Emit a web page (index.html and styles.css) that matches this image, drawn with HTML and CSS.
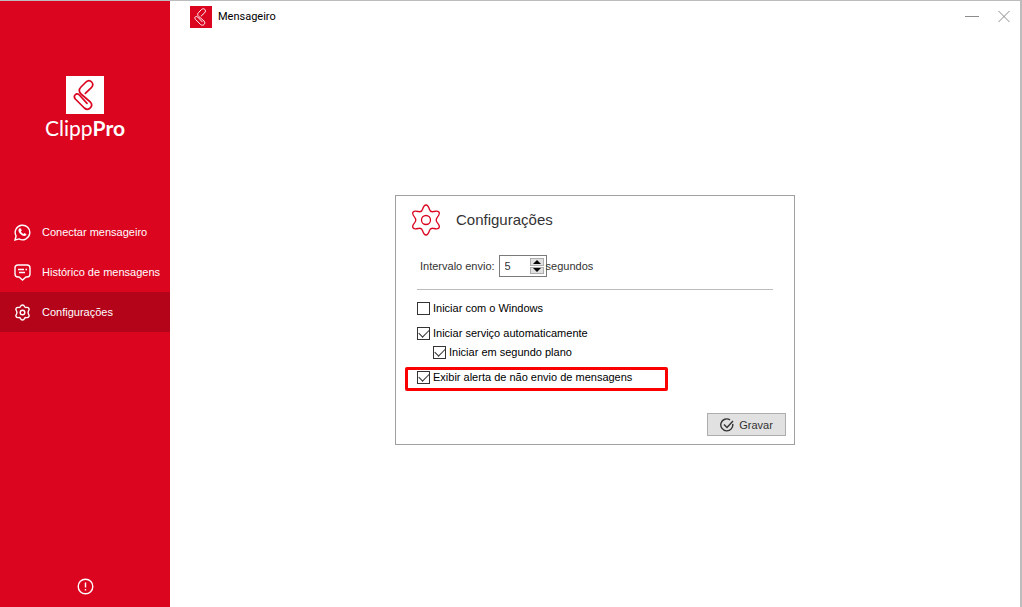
FILE: index.html
```html
<!doctype html>
<html lang="pt-BR">

<head>
	<meta charset="utf-8">
	<title>Mensageiro</title>
	<link rel="stylesheet" href="styles.css">
</head>

<body>
	<svg class="defs" aria-hidden="true">
		<symbol id="clip" viewBox="0 0 114 114">
			<path d="M58 52L76 35C87 23 73 7 60 18L45 33C38 40 38 47 45 54L73 78C84 90 68 107 55 96L28 69C20 59 31 49 40 57L63 82" fill="none" stroke="currentColor" stroke-linecap="round" stroke-linejoin="round"/>
		</symbol>
	</svg>
	<div class="window">
		<aside class="sidebar">
			<div class="brand">
				<svg class="brand-mark"><use href="#clip"/></svg>
				<div class="brand-name">Clipp<b>Pro</b></div>
			</div>
			<nav class="menu">
				<a class="menu-item" href="#conectar">
					<svg class="icon" viewBox="0 0 17 17">
						<path d="M1 16l1.100-4A7.300 7.300 0 1 1 5 14.900z"/>
						<path d="M5.300 4.500c-1.700 1.600-.4 4 1.200 5.600s4 2.800 5.600 1.200c.6-.6.3-1.100-.1-1.400l-1.500-.8-1.100 1c-.9-.3-2.100-1.500-2.500-2.500l.9-1.100-.7-1.600c-.3-.8-1.100-1-1.800-.4z" class="solid"/>
					</svg>
					Conectar mensageiro
				</a>
				<a class="menu-item" href="#historico">
					<svg class="icon" viewBox="0 0 17 17">
						<path d="M4 1h9q3 0 3 3v6q0 3-3 3h-1l-3.500 3L5 13H4q-3 0-3-3V4q0-3 3-3z"/>
						<path d="M4 5.500h6M11.500 5.500h1.500M5 8.500h6"/>
					</svg>
					Histórico de mensagens
				</a>
				<a class="menu-item active" href="#configuracoes">
					<svg class="icon" viewBox="0 0 17 17">
						<path d="M6.500 2.500Q7 1 8.500 1t2 1.500q.5 1.200 2 .9 1.600-.3 2.400.9.700 1.400-.4 2.600-.9 1.600 0 3.200 1.100 1.200.4 2.600-.8 1.200-2.400.9-1.500-.3-2 .9-.5 1.500-2 1.500t-2-1.500q-.5-1.200-2-.9-1.600.3-2.400-.9-.7-1.400.4-2.600.9-1.600 0-3.200-1.100-1.200-.4-2.600.8-1.200 2.400-.9 1.500.3 2-.9z"/>
						<circle cx="8.500" cy="8.500" r="2.300"/>
					</svg>
					Configurações
				</a>
			</nav>
			<button class="about" aria-label="Sobre">
				<svg class="icon" viewBox="0 0 17 17">
					<circle cx="8.500" cy="8.500" r="7.300"/>
					<path d="M8.500 4.500v5M8.500 11v1.500"/>
				</svg>
			</button>
		</aside>

		<main class="main">
			<header class="titlebar">
				<svg class="app-icon"><use href="#clip"/></svg>
				<span class="app-title">Mensageiro</span>
				<button class="win-btn" aria-label="Minimizar">
					<svg viewBox="0 0 16 16"><path d="M1 7.500h14"/></svg>
				</button>
				<button class="win-btn" aria-label="Fechar">
					<svg viewBox="0 0 16 16"><path d="M2.500 2l11 11M13.500 2l-11 11"/></svg>
				</button>
			</header>

			<div class="content">
				<form class="panel">
					<div class="panel-head">
						<svg class="gear" viewBox="0 0 30 32">
							<path d="M11.500 5.500C12.300 3 13 1 15 1s2.700 2 3.500 4.500c.6 1.800 1.700 2.500 3.500 2.200 2.500-.5 4.500-1.200 5.800.3s.2 3.300-1.500 5.300c-1.300 1.600-1.300 3.800 0 5.400 1.700 2 2.800 3.800 1.500 5.300s-3.300.8-5.800.3c-1.800-.3-2.900.4-3.500 2.200C17.700 29 17 31 15 31s-2.700-2-3.500-4.500c-.6-1.800-1.700-2.500-3.500-2.200-2.500.5-4.500 1.200-5.800-.3s-.2-3.300 1.500-5.300c1.300-1.600 1.300-3.800 0-5.400C2 11.300.9 9.500 2.200 8s3.300-.8 5.800-.3c1.800.3 2.900-.4 3.500-2.200z"/>
							<circle cx="15" cy="16" r="4.500"/>
						</svg>
						<h1>Configurações</h1>
					</div>

					<div class="interval">
						<label for="intervalo">Intervalo envio:</label>
						<div class="spin">
							<input type="text" inputmode="numeric" id="intervalo" value="5">
							<div class="spin-btns">
								<button type="button" aria-label="Aumentar"><svg viewBox="0 0 8 4"><path d="M0 4l4-4 4 4z"/></svg></button>
								<button type="button" aria-label="Diminuir"><svg viewBox="0 0 8 4"><path d="M0 0l4 4 4-4z"/></svg></button>
							</div>
						</div>
						<span>segundos</span>
					</div>

					<div class="options">
						<label class="option"><input type="checkbox">Iniciar com o Windows</label>
						<div class="option-group">
							<label class="option"><input type="checkbox" checked>Iniciar serviço automaticamente</label>
							<label class="option sub"><input type="checkbox" checked>Iniciar em segundo plano</label>
						</div>
						<div class="highlight">
							<label class="option"><input type="checkbox" checked>Exibir alerta de não envio de mensagens</label>
						</div>
					</div>

					<button type="button" class="save">
						<svg viewBox="0 0 14 14">
							<path d="M12.700 5.800A6 6 0 1 1 10 1.800M4 6.500l3 3L13 3"/>
						</svg>
						Gravar
					</button>
				</form>
			</div>
		</main>
	</div>
</body>

</html>
```
FILE: styles.css
```css
* {
	box-sizing: border-box;
}

body {
	margin: 0;
	font: 11px/14px "Liberation Sans", Arial, sans-serif;
	color: #000000;
}

button,
input {
	font: inherit;
	margin: 0;
	padding: 0;
}

svg {
	display: block;
	fill: none;
	stroke: currentColor;
}

.defs {
	position: absolute;
	width: 0;
	height: 0;
}

.window {
	display: flex;
	min-height: 100vh;
	border-top: 1px solid #bcbcbc;
	border-right: 2px solid #bcbcbc;
	background: #ffffff;
}

/* sidebar */
.sidebar {
	display: flex;
	flex-direction: column;
	flex: 0 0 170px;
	background: #db0520;
	color: #ffffff;
}

.brand {
	display: flex;
	flex-direction: column;
	align-items: center;
	height: 211px;
	padding-top: 75px;
}

.brand-mark {
	width: 38px;
	height: 38px;
	background: #ffffff;
	color: #db0520;
	stroke-width: 5;
}

.brand-name {
	font: 21px/28px Lato, sans-serif;
}

.menu-item {
	display: flex;
	align-items: center;
	gap: 11px;
	height: 40px;
	padding-left: 14px;
	color: #ffffff;
	text-decoration: none;
	white-space: nowrap;
}

.menu-item.active {
	background: #b30419;
}

.icon {
	width: 17px;
	height: 17px;
	stroke-width: 1.4;
}

.icon .solid {
	fill: currentColor;
	stroke: none;
}

.about {
	margin: auto auto 12px;
	border: 0;
	background: none;
	color: #ffffff;
}

/* main */
.main {
	display: flex;
	flex-direction: column;
	flex: 1;
}

.titlebar {
	display: flex;
	align-items: center;
	height: 32px;
	padding: 0 8px 0 20px;
}

.app-icon {
	width: 22px;
	height: 22px;
	background: #db0520;
	color: #ffffff;
	stroke-width: 5;
}

.app-title {
	flex: 1;
	margin-left: 6px;
	font-family: Roboto, sans-serif;
}

.win-btn {
	width: 16px;
	height: 16px;
	margin-left: 16px;
	border: 0;
	background: none;
	color: #8c8c8c;
}

.content {
	display: flex;
	flex: 1;
	align-items: center;
	justify-content: center;
}

.panel {
	display: flex;
	flex-direction: column;
	width: 400px;
	padding: 8px;
	border: 1px solid #a0a0a0;
}

.panel-head {
	display: flex;
	align-items: center;
	gap: 15px;
	padding-left: 7px;
	color: #333333;
}

.gear {
	width: 30px;
	height: 32px;
	color: #db0520;
	stroke-width: 1.3;
}

.panel-head h1 {
	margin: 0;
	font-size: 15px;
	line-height: 20px;
	font-weight: normal;
}

.interval {
	display: flex;
	align-items: center;
	margin: 0 12px;
	padding: 19px 0 12px 4px;
	color: #333333;
}

.interval label {
	margin-right: 4px;
}

.interval span {
	margin-left: -1px;
}

.spin {
	display: flex;
	width: 48px;
	height: 22px;
	padding: 2px;
	border: 1px solid #7a7a7a;
	background: #ffffff;
}

.spin input {
	flex: 1;
	min-width: 0;
	padding-left: 3px;
	border: 0;
	outline: 0;
	color: #333333;
}

.spin-btns {
	display: grid;
	gap: 1px;
	width: 14px;
}

.spin-btns button {
	display: grid;
	place-items: center;
	border: 1px solid #adadad;
	background: #e1e1e1;
}

.spin-btns svg {
	width: 8px;
	height: 4px;
	fill: #000000;
	stroke: none;
}

/* options */
.options {
	margin: 0 13px;
	padding-top: 11px;
	border-top: 1px solid #bcbcbc;
}

.option {
	display: flex;
	align-items: center;
	gap: 3px;
	height: 14px;
}

.option input {
	appearance: none;
	width: 13px;
	height: 13px;
	border: 1px solid #333333;
	background: #ffffff;
}

.option input:checked::before {
	content: "";
	display: block;
	width: 9px;
	height: 5px;
	margin: 1px;
	border: solid #333333;
	border-width: 0 0 1px 1px;
	transform: rotate(-45deg);
}

.option-group {
	display: grid;
	gap: 5px;
	margin: 11px 0 8px;
}

.option.sub {
	margin-left: 16px;
}

.highlight {
	width: 263px;
	margin-left: -12px;
	padding: 0 0 4px 9px;
	border: 3px solid #fa0000;
	border-radius: 2px;
}

.save {
	display: flex;
	align-items: center;
	justify-content: center;
	gap: 5px;
	align-self: flex-end;
	width: 79px;
	height: 23px;
	margin-top: 22px;
	border: 1px solid #adadad;
	background: #e1e1e1;
	color: #333333;
}

.save svg {
	width: 14px;
	height: 14px;
	stroke-width: 1.4;
}
```
